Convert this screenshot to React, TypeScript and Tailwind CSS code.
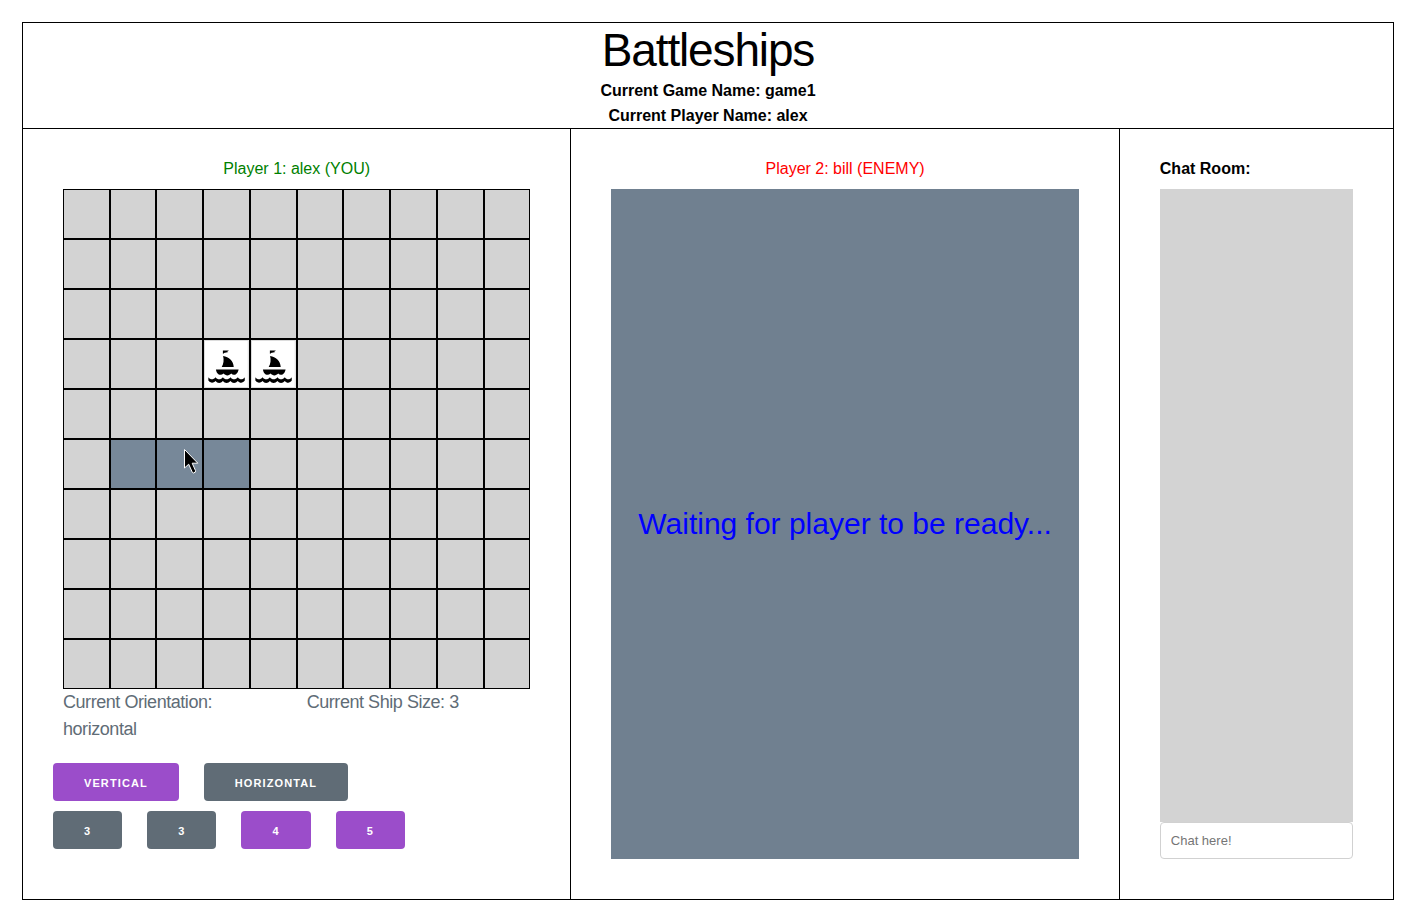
import React from "react";

const SIZE = 10;
const SHIPS = new Set(["3-3", "3-4"]);
const PREVIEW = new Set(["5-1", "5-2", "5-3"]);

function ShipIcon() {
  return (
    <svg viewBox="0 0 45 48" preserveAspectRatio="none" className="block h-full w-full bg-white" aria-hidden="true">
      <rect x="0.5" y="0.5" width="44" height="47" fill="none" stroke="#dcdcdc" strokeWidth="1" />
      <path d="M19 10.4 L25.2 10.4 L23.2 11.5 L24.6 12.1 L20 13 L19.6 13.8 L19 13.8 Z" fill="#000" />
      <path d="M19.2 16 C25 16.8 29.6 20.6 29.9 27 L17.8 27 C19.8 23.6 20.2 19.8 19.2 16 Z" fill="#000" />
      <path
        d="M12 29.4 L34.8 29.4 C34.4 31.6 33.4 33.4 31.8 34.4 C30 35.2 28.6 34.8 27.4 33.6 C25.2 36 21.8 36 19.6 33.6 C18.2 34.9 16.4 35.2 14.8 34.4 C13.2 33.2 12.3 31.6 12 29.4 Z"
        fill="#000"
      />
      <path
        d="M4.4 37.2 C6.4 39.9 9.4 39.9 11.6 37.2 C13.6 39.9 16.8 39.9 19 37.2 C21 39.9 24.4 39.9 26.6 37.2 C28.6 39.9 31.8 39.9 34 37.2 C36 39.9 39 39.9 41 37.2 L41 40.6 C39 43.4 36 43.4 34 41 C31.8 43.6 28.6 43.6 26.6 41 C24.4 43.6 21 43.6 19 41 C16.8 43.6 13.6 43.6 11.6 41 C9.4 43.4 6.4 43.2 4.4 40.6 Z"
        fill="#000"
      />
    </svg>
  );
}

function Pointer() {
  return (
    <svg viewBox="0 0 16 26" className="pointer-events-none absolute top-2 left-[26px] z-10 h-[26px] w-4" aria-hidden="true">
      <path
        d="M1.5 1.5 L1.5 20 L5.7 16.2 L9.3 24.3 L10.3 25 L12.3 24.2 L12.5 22.6 L9.2 15.2 L14.8 15.2 Z"
        fill="#000"
        stroke="#fff"
        strokeWidth="1"
      />
    </svg>
  );
}

function Cell({ row, col }: { row: number; col: number }) {
  const key = `${row}-${col}`;
  const color = PREVIEW.has(key) ? "bg-[#778899]" : "bg-[#d3d3d3]";
  return (
    <button type="button" aria-label={`Row ${row + 1}, column ${col + 1}`} className={`relative h-[50px] border border-black ${color}`}>
      {SHIPS.has(key) && <ShipIcon />}
      {key === "5-2" && <Pointer />}
    </button>
  );
}

function ActionButton({ label, muted }: { label: string; muted?: boolean }) {
  return (
    <button
      type="button"
      className={`h-[38px] rounded px-[31px] pt-0.5 text-[11px] font-bold tracking-widest text-white uppercase ${muted ? "bg-[#606c76]" : "bg-[#9b4dca]"}`}
    >
      {label}
    </button>
  );
}

export default function App() {
  const cells = Array.from({ length: SIZE * SIZE }, (_, i) => i);
  return (
    <div className="flex min-h-screen flex-col bg-white pt-[22px] pr-[18px] pb-[18px] pl-[22px] font-['Liberation_Sans',Arial,sans-serif] text-base text-black">
      <header className="border-x border-t border-black text-center">
        <h1 className="mb-px text-[46px] leading-[54px] font-light tracking-tight">Battleships</h1>
        <p className="leading-[25px] font-bold">Current Game Name: game1</p>
        <p className="leading-[25px] font-bold">Current Player Name: alex</p>
      </header>

      <main className="grid flex-1 grid-cols-[2fr_2fr_1fr] border-y border-l border-black">
        <section className="flex min-w-0 flex-col border-r border-black px-10 pt-5 pb-10">
          <h2 className="text-center leading-10 text-[#008000]">Player 1: alex (YOU)</h2>
          <div className="grid grid-cols-10">
            {cells.map((i) => (
              <Cell key={i} row={Math.floor(i / SIZE)} col={i % SIZE} />
            ))}
          </div>
          <div className="grid grid-cols-2 gap-5 text-lg leading-[27px] tracking-tight text-[#606c76]">
            <p>Current Orientation: horizontal</p>
            <p>Current Ship Size: 3</p>
          </div>
          <div className="-mx-2.5 mt-5 flex flex-col gap-2.5">
            <div className="flex gap-[25px]">
              <ActionButton label="Vertical" />
              <ActionButton label="Horizontal" muted />
            </div>
            <div className="flex gap-[25px]">
              <ActionButton label="3" muted />
              <ActionButton label="3" muted />
              <ActionButton label="4" />
              <ActionButton label="5" />
            </div>
          </div>
        </section>

        <section className="flex min-w-0 flex-col border-r border-black px-10 pt-5 pb-10">
          <h2 className="text-center leading-10 text-[#ff0000]">Player 2: bill (ENEMY)</h2>
          <div className="flex flex-1 items-center justify-center bg-[#708090]">
            <p className="text-center text-[30px] leading-10 text-[#0000ff]">Waiting for player to be ready...</p>
          </div>
        </section>

        <section className="flex min-w-0 flex-col border-r border-black px-10 pt-5 pb-10">
          <h2 className="leading-10 font-bold">Chat Room:</h2>
          <div className="flex-1 bg-[#d3d3d3]" />
          <input
            type="text"
            aria-label="Chat message"
            placeholder="Chat here!"
            className="h-[37px] w-full rounded border border-[#d1d1d1] bg-white px-2.5 text-[13px] placeholder:text-[#757575]"
          />
        </section>
      </main>
    </div>
  );
}
